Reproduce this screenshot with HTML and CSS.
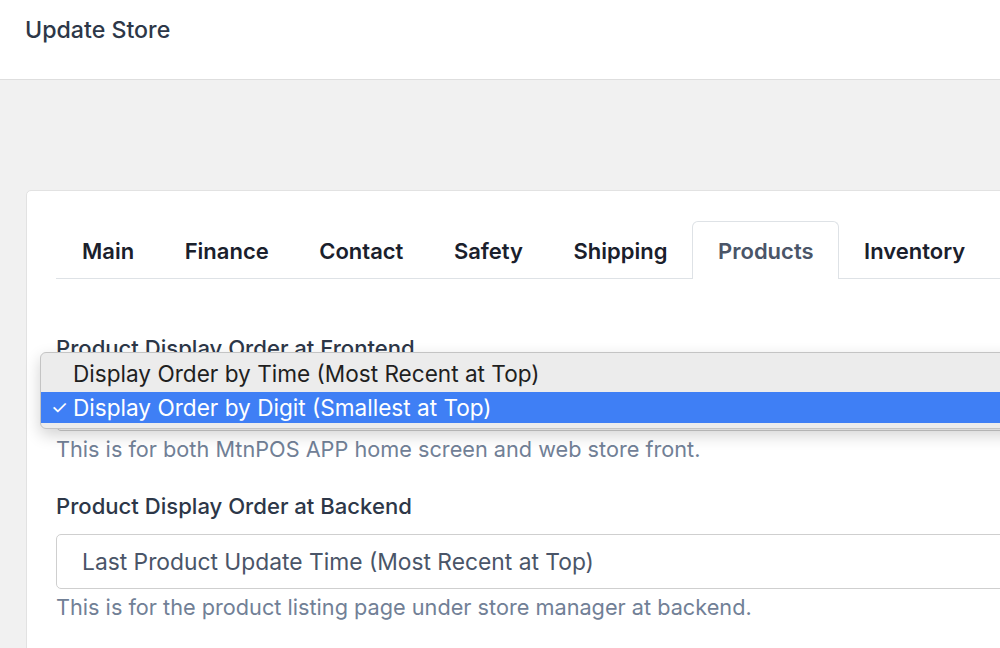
FILE: index.html
```html
<!DOCTYPE html>
<html lang="en">
<head>
<meta charset="utf-8">
<title>Update Store</title>
<link rel="stylesheet" href="styles.css">
</head>
<body>
<header class="topbar">
  <h1 class="title">Update Store</h1>
</header>
<main class="content">
  <section class="card">
    <nav class="tabs">
      <a class="tab">Main</a>
      <a class="tab">Finance</a>
      <a class="tab">Contact</a>
      <a class="tab">Safety</a>
      <a class="tab">Shipping</a>
      <a class="tab active">Products</a>
      <a class="tab">Inventory</a>
    </nav>
    <div class="form">
      <div class="field">
        <label class="label">Product Display Order at Frontend</label>
        <div class="select-wrap">
          <div class="select">Display Order by Digit (Smallest at Top)</div>
          <ul class="popup">
            <li class="option">Display Order by Time (Most Recent at Top)</li>
            <li class="option selected"><span class="check">✓</span>Display Order by Digit (Smallest at Top)</li>
          </ul>
        </div>
        <p class="help">This is for both MtnPOS APP home screen and web store front.</p>
      </div>
      <div class="field">
        <label class="label">Product Display Order at Backend</label>
        <div class="select">Last Product Update Time (Most Recent at Top)</div>
        <p class="help">This is for the product listing page under store manager at backend.</p>
      </div>
    </div>
  </section>
</main>
</body>
</html>
```
FILE: styles.css
```css
html, body {
  margin: 0;
  padding: 0;
  height: 100%;
  overflow: hidden;
  background: #f1f1f1;
  font-family: Inter, "Liberation Sans", sans-serif;
}
.topbar {
  background: #fff;
  height: 79px;
  border-bottom: 1px solid #dedede;
  display: flex;
  align-items: center;
  padding-left: 25px;
}
.title {
  margin: 0;
  font-size: 23.2px;
  font-weight: 500;
  color: #2d3748;
  padding-bottom: 20px;
}
.content {
  padding: 110px 0 0 26px;
}
.card {
  width: 1100px;
  background: #fff;
  border: 1px solid #e2e2e2;
  border-radius: 5px;
  padding: 30px 0 40px 29px;
  height: 600px;
}
.tabs {
  display: flex;
  border-bottom: 1px solid #dee2e6;
  height: 57px;
}
.tab {
  display: block;
  padding: 0 24.5px 0 25px;
  line-height: 59px;
  height: 57px;
  font-size: 22px;
  font-weight: 600;
  color: #1a202c;
  border: 1px solid transparent;
  border-bottom: none;
  margin-left: -1px;
  border-radius: 6px 6px 0 0;
  white-space: nowrap;
}
.tab:first-child { margin-left: 0; }
.tab.active {
  color: #4a5568;
  border-color: #dee2e6;
  background: #fff;
  height: 58px;
  margin-bottom: -1px;
  box-sizing: border-box;
  line-height: 58px;
}
.form {
  padding-top: 55px;
}
.field {
  margin-bottom: 29px;
}
.label {
  display: block;
  font-size: 22.1px;
  font-weight: 500;
  color: #2d3748;
  line-height: 28px;
  margin-bottom: 14px;
}
.select-wrap {
  position: relative;
}
.select {
  height: 55px;
  box-sizing: border-box;
  border: 1px solid #cfcfcf;
  border-radius: 5px;
  padding-left: 25px;
  font-size: 22.8px;
  line-height: 53px;
  color: #4a5568;
  white-space: nowrap;
}
.help {
  margin: 4px 0 0;
  font-size: 21.7px;
  color: #718096;
  line-height: 28px;
  white-space: nowrap;
}
.popup {
  position: absolute;
  left: -16px;
  top: -24px;
  width: 1000px;
  margin: 0;
  padding: 4px 0 5px;
  list-style: none;
  background: #ececec;
  border: 1px solid #c4c4c4;
  border-radius: 6px;
  box-shadow: 0 6px 16px rgba(0,0,0,0.18);
}
.option {
  height: 33px;
  line-height: 33px;
  padding-left: 32px;
  font-size: 22.6px;
  color: #1f1f1f;
  position: relative;
  white-space: nowrap;
}
.option.selected {
  background: #3f7ff5;
  color: #fff;
  height: 31px;
  line-height: 31px;
  margin-top: 2px;
}
.check {
  position: absolute;
  left: 10px;
  font-size: 19px;
}
```
